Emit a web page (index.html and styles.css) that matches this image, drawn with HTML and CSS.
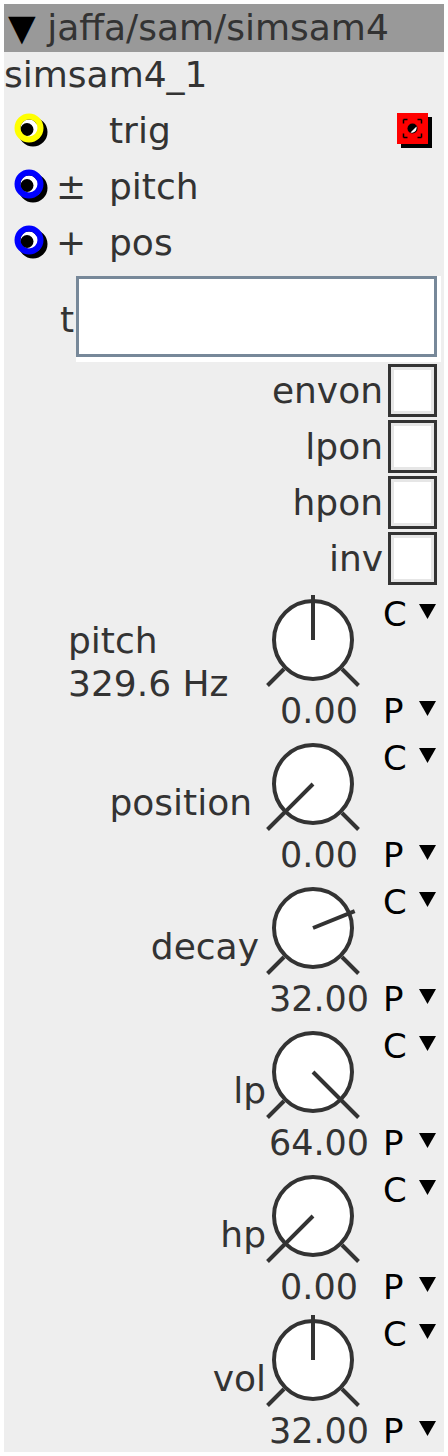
FILE: index.html
```html
<!DOCTYPE html>
<html lang="en">
<head>
    <meta charset="UTF-8">
    <title>jaffa/sam/simsam4</title>
    <link rel="stylesheet" href="styles.css">
</head>
<body>
    <div class="module">
        <div class="module-title"><span class="title-caret">▼</span> jaffa/sam/simsam4</div>
        <div class="instance-name">simsam4_1</div>

        <!-- inputs -->
        <div class="port-row">
            <svg class="jack" viewBox="0 0 36 36">
                <circle cx="19" cy="19" r="11.5" fill="none" stroke="#000" stroke-width="6"/>
                <circle cx="15" cy="15" r="8.5" fill="#fff"/>
                <circle cx="13" cy="16.5" r="6.5" fill="#000"/>
                <circle cx="15" cy="15" r="11.5" fill="none" stroke="#ff0" stroke-width="6"/>
            </svg>
            <span class="port-sign"></span>
            <span class="port-name">trig</span>
            <svg class="gate" viewBox="0 0 36 36">
                <rect x="4" y="4" width="31" height="31" fill="#000"/>
                <rect x="0" y="0" width="31" height="31" fill="#f00"/>
                <rect x="6.5" y="6.5" width="18" height="18" fill="none" stroke="#000" stroke-width="1.5" stroke-dasharray="4 10 4 0"/>
                <circle cx="15.5" cy="15.5" r="5" fill="#000"/>
                <path d="M19.5 13.5 A5 5 0 0 1 13.5 19.5 Z" fill="#fff"/>
            </svg>
        </div>
        <div class="port-row">
            <svg class="jack" viewBox="0 0 36 36">
                <circle cx="19" cy="19" r="11.5" fill="none" stroke="#000" stroke-width="6"/>
                <circle cx="15" cy="15" r="8.5" fill="#fff"/>
                <circle cx="13" cy="16.5" r="6.5" fill="#000"/>
                <circle cx="15" cy="15" r="11.5" fill="none" stroke="#00f" stroke-width="6"/>
            </svg>
            <span class="port-sign">±</span>
            <span class="port-name">pitch</span>
        </div>
        <div class="port-row">
            <svg class="jack" viewBox="0 0 36 36">
                <circle cx="19" cy="19" r="11.5" fill="none" stroke="#000" stroke-width="6"/>
                <circle cx="15" cy="15" r="8.5" fill="#fff"/>
                <circle cx="13" cy="16.5" r="6.5" fill="#000"/>
                <circle cx="15" cy="15" r="11.5" fill="none" stroke="#00f" stroke-width="6"/>
            </svg>
            <span class="port-sign">+</span>
            <span class="port-name">pos</span>
        </div>

        <!-- params -->
        <div class="text-row">
            <label class="text-label" for="tField">t</label>
            <span class="text-field"><input type="text" id="tField"></span>
        </div>

        <div class="check-row"><span>envon</span><span class="check"></span></div>
        <div class="check-row"><span>lpon</span><span class="check"></span></div>
        <div class="check-row"><span>hpon</span><span class="check"></span></div>
        <div class="check-row"><span>inv</span><span class="check"></span></div>

        <div class="knob-row">
            <div class="knob-label freq">pitch<br>329.6 Hz</div>
            <svg class="knob-dial" viewBox="0 0 100 100">
                <circle cx="50" cy="50" r="39" fill="#fff" stroke="#333" stroke-width="4"/>
                <path d="M21 79L4.5 95.5M79 79L95.5 95.5M50 50L50 5" stroke="#333" stroke-width="4"/>
            </svg>
            <div class="knob-mode"><span class="mode-key">C</span><svg class="caret" viewBox="0 0 17 15"><path d="M0 0H17L8.5 15Z"/></svg></div>
            <div class="knob-value">0.00</div>
            <div class="knob-mode port"><span class="mode-key">P</span><svg class="caret" viewBox="0 0 17 15"><path d="M0 0H17L8.5 15Z"/></svg></div>
        </div>

        <div class="knob-row position">
            <div class="knob-label">position</div>
            <svg class="knob-dial" viewBox="0 0 100 100">
                <circle cx="50" cy="50" r="39" fill="#fff" stroke="#333" stroke-width="4"/>
                <path d="M21 79L4.5 95.5M79 79L95.5 95.5M50 50L18.2 81.8" stroke="#333" stroke-width="4"/>
            </svg>
            <div class="knob-mode"><span class="mode-key">C</span><svg class="caret" viewBox="0 0 17 15"><path d="M0 0H17L8.5 15Z"/></svg></div>
            <div class="knob-value">0.00</div>
            <div class="knob-mode port"><span class="mode-key">P</span><svg class="caret" viewBox="0 0 17 15"><path d="M0 0H17L8.5 15Z"/></svg></div>
        </div>

        <div class="knob-row decay">
            <div class="knob-label">decay</div>
            <svg class="knob-dial" viewBox="0 0 100 100">
                <circle cx="50" cy="50" r="39" fill="#fff" stroke="#333" stroke-width="4"/>
                <path d="M21 79L4.5 95.5M79 79L95.5 95.5M50 50L91.7 33.1" stroke="#333" stroke-width="4"/>
            </svg>
            <div class="knob-mode"><span class="mode-key">C</span><svg class="caret" viewBox="0 0 17 15"><path d="M0 0H17L8.5 15Z"/></svg></div>
            <div class="knob-value">32.00</div>
            <div class="knob-mode port"><span class="mode-key">P</span><svg class="caret" viewBox="0 0 17 15"><path d="M0 0H17L8.5 15Z"/></svg></div>
        </div>

        <div class="knob-row">
            <div class="knob-label">lp</div>
            <svg class="knob-dial" viewBox="0 0 100 100">
                <circle cx="50" cy="50" r="39" fill="#fff" stroke="#333" stroke-width="4"/>
                <path d="M21 79L4.5 95.5M79 79L95.5 95.5M50 50L82 82" stroke="#333" stroke-width="4"/>
            </svg>
            <div class="knob-mode"><span class="mode-key">C</span><svg class="caret" viewBox="0 0 17 15"><path d="M0 0H17L8.5 15Z"/></svg></div>
            <div class="knob-value">64.00</div>
            <div class="knob-mode port"><span class="mode-key">P</span><svg class="caret" viewBox="0 0 17 15"><path d="M0 0H17L8.5 15Z"/></svg></div>
        </div>

        <div class="knob-row">
            <div class="knob-label">hp</div>
            <svg class="knob-dial" viewBox="0 0 100 100">
                <circle cx="50" cy="50" r="39" fill="#fff" stroke="#333" stroke-width="4"/>
                <path d="M21 79L4.5 95.5M79 79L95.5 95.5M50 50L18.2 81.8" stroke="#333" stroke-width="4"/>
            </svg>
            <div class="knob-mode"><span class="mode-key">C</span><svg class="caret" viewBox="0 0 17 15"><path d="M0 0H17L8.5 15Z"/></svg></div>
            <div class="knob-value">0.00</div>
            <div class="knob-mode port"><span class="mode-key">P</span><svg class="caret" viewBox="0 0 17 15"><path d="M0 0H17L8.5 15Z"/></svg></div>
        </div>

        <div class="knob-row">
            <div class="knob-label">vol</div>
            <svg class="knob-dial" viewBox="0 0 100 100">
                <circle cx="50" cy="50" r="39" fill="#fff" stroke="#333" stroke-width="4"/>
                <path d="M21 79L4.5 95.5M79 79L95.5 95.5M50 50L50 5" stroke="#333" stroke-width="4"/>
            </svg>
            <div class="knob-mode"><span class="mode-key">C</span><svg class="caret" viewBox="0 0 17 15"><path d="M0 0H17L8.5 15Z"/></svg></div>
            <div class="knob-value">32.00</div>
            <div class="knob-mode port"><span class="mode-key">P</span><svg class="caret" viewBox="0 0 17 15"><path d="M0 0H17L8.5 15Z"/></svg></div>
        </div>
    </div>
</body>
</html>
```

FILE: styles.css
```css
* {
    box-sizing: border-box;
}

body {
    margin: 4px;
    background: #fff;
    font-family: "DejaVu Sans", sans-serif;
}

.module {
    width: 440px;
    height: 1448px;
    background: #eee;
    color: #333;
    font-size: 36px;
}

.module-title {
    height: 48px;
    line-height: 48px;
    padding-left: 4px;
    background: #999;
    white-space: nowrap;
}

.title-caret {
    color: #000;
}

.instance-name {
    height: 51px;
    line-height: 46px;
}

/* ports */
.port-row {
    display: flex;
    align-items: center;
    height: 56px;
    line-height: 56px;
}

.jack {
    width: 36px;
    height: 36px;
    margin-left: 10px;
}

.port-sign {
    width: 53px;
    margin-left: 6px;
}

.gate {
    width: 36px;
    height: 36px;
    margin-left: auto;
    margin-right: 11px;
}

/* text param */
.text-row {
    display: flex;
    align-items: center;
    justify-content: flex-end;
    height: 91px;
    padding: 5px 3px 0 0;
}

.text-label {
    margin-right: 2px;
}

.text-field {
    display: block;
    border-style: solid;
    border-color: #fff;
    border-width: 0 4px 5px 0;
}

.text-field input {
    display: block;
    width: 361px;
    height: 81px;
    margin: 0;
    padding: 0 6px;
    border: 3px solid #789;
    background: #fff;
    font: inherit;
    color: #333;
    outline: none;
}

/* checkboxes */
.check-row {
    display: flex;
    align-items: center;
    justify-content: flex-end;
    gap: 5px;
    height: 56px;
    padding-right: 7px;
}

.check {
    width: 49px;
    height: 53px;
    border: 3px solid #333;
    background: #fff;
    box-shadow: inset 0 0 0 3px #e6e6e6;
}

/* knobs */
.knob-row {
    display: grid;
    grid-template-columns: 1fr 112px 69px;
    grid-template-rows: 105px 39px;
    height: 144px;
}

.knob-label {
    grid-column: 1;
    grid-row: 1 / 3;
    padding-top: 53px;
    margin-right: -3px;
    line-height: 40px;
    text-align: right;
    white-space: nowrap;
}

.knob-label.freq {
    padding-top: 33px;
    padding-left: 64px;
    line-height: 43px;
    text-align: left;
}

.position .knob-label {
    margin-right: 11px;
}

.decay .knob-label {
    margin-right: 4px;
}

.knob-dial {
    grid-column: 2;
    grid-row: 1;
    display: block;
    width: 100px;
    height: 100px;
    margin-top: 4px;
}

.knob-mode {
    grid-column: 3;
    grid-row: 1;
    display: flex;
    align-items: flex-start;
    padding: 8px 0 0 8px;
    font-size: 34px;
    line-height: 40px;
    color: #000;
}

.knob-mode.port {
    grid-row: 2;
    padding-top: 0;
}

.mode-key {
    width: 36px;
}

.caret {
    width: 17px;
    height: 15px;
    margin-top: 10px;
    fill: #000;
}

.knob-value {
    grid-column: 2;
    grid-row: 2;
    font-size: 35px;
    line-height: 40px;
    text-align: center;
}
```
